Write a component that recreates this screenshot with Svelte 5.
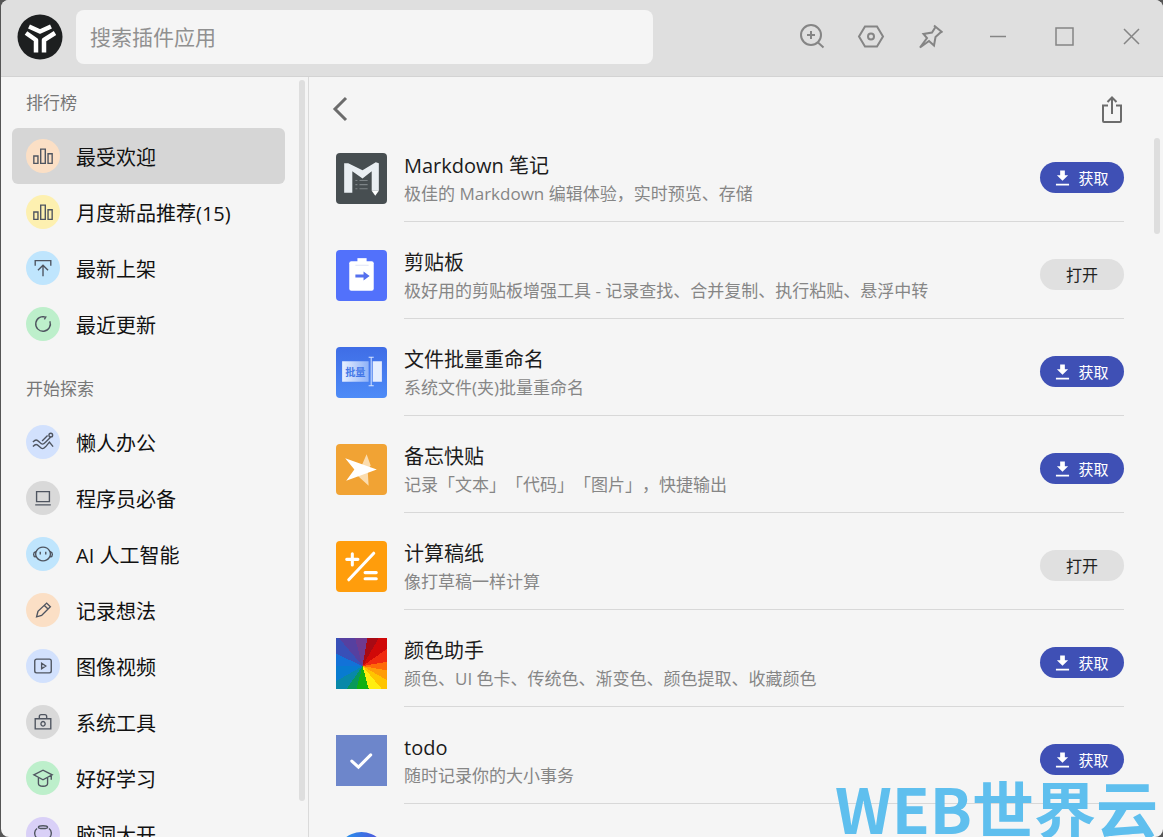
<script>
    let query = $state("");
    let active = $state("最受欢迎");

    const groups = [
        {
            title: "排行榜",
            items: [
                { name: "最受欢迎", icon: "chart", tint: "peach" },
                { name: "月度新品推荐(15)", icon: "chart", tint: "yellow" },
                { name: "最新上架", icon: "upload", tint: "sky" },
                { name: "最近更新", icon: "refresh", tint: "green" },
            ],
        },
        {
            title: "开始探索",
            items: [
                { name: "懒人办公", icon: "lazy", tint: "blue" },
                { name: "程序员必备", icon: "laptop", tint: "gray" },
                { name: "AI 人工智能", icon: "robot", tint: "sky" },
                { name: "记录想法", icon: "pencil", tint: "peach" },
                { name: "图像视频", icon: "video", tint: "blue" },
                { name: "系统工具", icon: "toolbox", tint: "gray" },
                { name: "好好学习", icon: "study", tint: "green" },
                { name: "脑洞大开", icon: "brain", tint: "purple" },
            ],
        },
    ];

    // 24x24 stroke icons
    const paths = {
        chart: "M2 12h4.500v8H2zM9.500 4.500h5V20h-5zM17.500 9.500H22V20h-4.500z",
        upload: "M3.500 9.500V4h17v5.500M12 21V9.500M6.500 14.500L12 9l5.500 5.500",
        refresh: "M19.500 9a8 8 0 1 1-4.500-4.500M11 4l4 .5-1.500 2.500",
        lazy: "M1 12c3-3 4-3 7 0s4 3 7 0l6-6M1 17c3-3 4-3 7 0s4 3 7 0l4-5 4 5M11 11l6-6M20.500 2.500a2 2 0 1 0 2 2 2 2 0 0 0-2-2",
        laptop: "M5 5h14v11H5zM3.500 19.500h17",
        robot: "M12 4.500a8 7.500 0 1 0 .1 0zM4 9.500c-3 1-3 5 0 6M20 9.500c3 1 3 5 0 6M9 9.500v3M15 9.500v3",
        pencil: "M5 19.500l1.500-6L16 4.500l4 4-9.500 9.500zM13.500 7l4 4",
        video: "M5 4.500h14a2 2 0 0 1 2 2v11a2 2 0 0 1-2 2H5a2 2 0 0 1-2-2v-11a2 2 0 0 1 2-2zM10.500 9v6l4.500-3z",
        toolbox: "M3.500 8.500h17v11h-17zM8 8.500V6a2 2 0 0 1 2-2h4a2 2 0 0 1 2 2v2.500M12 11.500a2.300 2.500 0 1 0 .1 0z",
        study: "M2 8.500L12 3.500l10 5-10 5.500zM7 12v6c0 1.500 2 3 5 3s5-1.500 5-3v-6M21 9v5",
        brain: "M7 4.500a5 1.500 0 1 0 10 0 5 1.500 0 1 0-10 0M5.500 6c-3 2-3 5-2 8l3 5v3M18.500 6c3 2 3 5 2 8l-3 5v3",
    };

    const plugins = [
        { name: "Markdown 笔记", desc: "极佳的 Markdown 编辑体验，实时预览、存储", logo: "markdown" },
        { name: "剪贴板", desc: "极好用的剪贴板增强工具 - 记录查找、合并复制、执行粘贴、悬浮中转", logo: "clipboard", installed: true },
        { name: "文件批量重命名", desc: "系统文件(夹)批量重命名", logo: "rename" },
        { name: "备忘快贴", desc: "记录「文本」「代码」「图片」，快捷输出", logo: "memo" },
        { name: "计算稿纸", desc: "像打草稿一样计算", logo: "calc", installed: true },
        { name: "颜色助手", desc: "颜色、UI 色卡、传统色、渐变色、颜色提取、收藏颜色", logo: "color" },
        { name: "todo", desc: "随时记录你的大小事务", logo: "todo" },
        { name: "OneNote hub", desc: "", logo: "ball" },
    ];
</script>

<div class="window">
    <header class="titlebar">
        <svg class="logo" viewBox="0 0 46 46" aria-hidden="true">
            <circle cx="23" cy="23" r="22.500" fill="#1d1f20" />
            <g fill="none" stroke="#fff" stroke-width="4.500" stroke-linejoin="round">
                <path d="M12 12.500l11 5L34 12.500" />
                <path d="M9 19l10 7V38.500" />
                <path d="M38 19l-11 7V38.500" />
            </g>
        </svg>
        <input class="search" type="text" placeholder="搜索插件应用" aria-label="搜索插件应用" bind:value={query} />
        <div class="tools">
            <button aria-label="放大">
                <svg viewBox="0 0 28 28"><circle cx="14" cy="12" r="10" /><path d="M21 19.500l5.500 5M14 8v8M10 12h8" /></svg>
            </button>
            <button aria-label="设置">
                <svg viewBox="0 0 28 28"><path d="M8 3.500h12L26 13.500l-6 10H8l-6-10z" /><circle cx="14" cy="13.500" r="3" /></svg>
            </button>
            <button aria-label="固定">
                <svg viewBox="0 0 28 28"><path d="M17 2.500l8.500 7M18.500 4L15 9.500 6.500 11l3.500 4-7 9.500 9-6.500 5 4.500 1.500-8.500 5.500-5" /></svg>
            </button>
        </div>
        <div class="controls">
            <button aria-label="最小化"><svg viewBox="0 0 28 28"><path d="M6 13.500h16" /></svg></button>
            <button aria-label="最大化"><svg viewBox="0 0 28 28"><path d="M6 5h17v17H6z" /></svg></button>
            <button aria-label="关闭"><svg viewBox="0 0 28 28"><path d="M8 6l15 15M23 6L8 21" /></svg></button>
        </div>
    </header>

    <div class="content">
        <nav class="sidebar">
            {#each groups as group}
                <section class="group">
                    <h2>{group.title}</h2>
                    {#each group.items as item}
                        <button class="item" class:active={active === item.name} onclick={() => (active = item.name)}>
                            <span class="badge {item.tint}">
                                <svg viewBox="0 0 24 24"><path d={paths[item.icon]} /></svg>
                            </span>
                            <span>{item.name}</span>
                        </button>
                    {/each}
                </section>
            {/each}
            <span class="thumb"></span>
        </nav>

        <main class="main">
            <div class="bar">
                <button aria-label="返回"><svg viewBox="0 0 28 28"><path d="M19 2L8 13l11 11" stroke-width="3" /></svg></button>
                <button aria-label="分享">
                    <svg viewBox="0 0 28 28"><path d="M10 9.500H5V25a1 1 0 0 0 1 1h16a1 1 0 0 0 1-1V9.500h-5M14 18V2M9.500 6L14 1.500 18.500 6" /></svg>
                </button>
            </div>
            <ul class="list">
                {#each plugins as plugin}
                    <li class="row">
                        <div class="app-icon {plugin.logo}">
                            {#if plugin.logo === "markdown"}
                                <svg viewBox="0 0 50 50">
                                    <path d="M8 10h4l14 7 13-8 3 1v27h-7V18l-9 7-10-7v21H8z" fill="#e9eef2" />
                                    <path d="M35 37h7l-3.500 5z" fill="#fff" />
                                    <path d="M19 27h2M23 27h8M19 31h2M23 31h8M19 35h2M23 35h8" stroke="#7d8487" />
                                </svg>
                            {:else if plugin.logo === "clipboard"}
                                <svg viewBox="0 0 50 50">
                                    <rect x="13" y="11" width="24" height="29" rx="2" fill="#fff" />
                                    <rect x="21" y="8" width="9" height="6" fill="#fff" />
                                    <path d="M19 15h13" stroke="#dfe3f5" />
                                    <path d="M19 24h8v-3l6 4.500-6 4.500v-3h-8z" fill="#5570ee" />
                                </svg>
                            {:else if plugin.logo === "rename"}
                                <svg viewBox="0 0 50 50">
                                    <defs>
                                        <linearGradient id="field">
                                            <stop offset="0" stop-color="#e8f0ff" />
                                            <stop offset="1" stop-color="#8fb2f8" />
                                        </linearGradient>
                                    </defs>
                                    <path d="M6 14h26v20H6z" fill="url(#field)" />
                                    <path d="M36 14h9v20h-9z" fill="#e6eeff" />
                                    <path d="M32 10h5M34.500 10v28M32 38h5" stroke="#d5e3ff" fill="none" />
                                    <text x="9" y="28" font-size="10" font-weight="700" fill="#4478e8">批量</text>
                                </svg>
                            {:else if plugin.logo === "memo"}
                                <svg viewBox="0 0 50 50">
                                    <path d="M30 10l4 11-3 4 1 16-11-10z" fill="#fbdcae" />
                                    <path d="M9 14l31 11L10 36l8-11z" fill="#fff" />
                                </svg>
                            {:else if plugin.logo === "calc"}
                                <svg viewBox="0 0 50 50">
                                    <path d="M12.500 38L37 12M10.500 18h11M16 12.500v11M28.500 31h11M28.500 37h11" stroke="#fff" stroke-width="3" stroke-linecap="round" />
                                </svg>
                            {:else if plugin.logo === "todo"}
                                <svg viewBox="0 0 50 50">
                                    <path d="M15.500 25.500l6.500 6 12-12" fill="none" stroke="#fff" stroke-width="3" stroke-linecap="round" />
                                </svg>
                            {/if}
                        </div>
                        <div class="body">
                            <div class="text">
                                <h3>{plugin.name}</h3>
                                <p>{plugin.desc}</p>
                            </div>
                            {#if plugin.installed}
                                <button class="action open">打开</button>
                            {:else}
                                <button class="action">
                                    <svg viewBox="0 0 16 16" aria-hidden="true"><path d="M5.500 0h5v5H14L8 11 2 5h3.500zM1 14h14v2H1z" /></svg>
                                    获取
                                </button>
                            {/if}
                        </div>
                    </li>
                {/each}
            </ul>
            <span class="thumb"></span>
        </main>
    </div>
    <div class="watermark">WEB世界云</div>
</div>

<style>
    :global(body) {
        background: #555;
        font-family: "Open Sans", "Noto Sans CJK SC", sans-serif;
        text-spacing-trim: space-all;
    }

    button {
        border: none;
        background: none;
        padding: 0;
        font-family: inherit;
        cursor: pointer;
    }

    h2,
    h3,
    p,
    ul {
        margin: 0;
        padding: 0;
        font-weight: 400;
    }

    .window {
        position: relative;
        box-sizing: border-box;
        height: 100vh;
        margin-left: 1px;
        display: flex;
        flex-direction: column;
        background: #f5f5f5;
        border-radius: 8px;
        overflow: hidden;
    }

    .titlebar {
        display: flex;
        align-items: center;
        flex: none;
        height: 74px;
        padding: 0 0 2px 16px;
        background: #dfdfdf;
        border-bottom: 1px solid #d3d3d3;
    }

    .logo {
        flex: none;
        width: 46px;
        height: 46px;
        margin-right: 13px;
    }

    .search {
        flex: 1;
        min-width: 0;
        box-sizing: border-box;
        height: 54px;
        margin-right: 128px;
        padding: 0 14px;
        border: none;
        border-radius: 8px;
        outline: none;
        background: #f5f5f5;
        font-family: inherit;
        font-size: 21px;
        color: #222;
    }

    .search::placeholder {
        color: #909090;
    }

    .tools,
    .controls {
        display: flex;
        flex: none;
    }

    .tools {
        margin-right: 4px;
    }

    .titlebar button {
        display: grid;
        place-items: center;
        width: 60px;
        height: 54px;
    }

    .titlebar .controls button {
        width: 66px;
    }

    .titlebar button svg {
        width: 28px;
        height: 28px;
        fill: none;
        stroke: #858585;
        stroke-width: 2;
    }

    .titlebar .controls svg {
        stroke-width: 1.5;
    }

    .content {
        display: flex;
        flex: 1;
        min-height: 0;
    }

    .sidebar {
        position: relative;
        flex: none;
        width: 273px;
        padding: 0 23px 0 11px;
        border-right: 1px solid #dadada;
        overflow: hidden;
    }

    .group + .group {
        margin-top: 11px;
    }

    .group h2 {
        padding-left: 14px;
        font-size: 17px;
        line-height: 51px;
        color: #777;
    }

    .item {
        display: flex;
        align-items: center;
        gap: 16px;
        width: 100%;
        height: 56px;
        padding-left: 14px;
        border-radius: 6px;
        font-size: 20px;
        color: #111;
        text-align: left;
    }

    .item.active {
        background: #d6d6d6;
    }

    .badge {
        display: grid;
        place-items: center;
        width: 34px;
        height: 34px;
        border-radius: 50%;
    }

    .badge svg {
        width: 22px;
        height: 22px;
        fill: none;
        stroke: #4f5560;
        stroke-width: 1.5;
    }

    .peach { background: #fbdfc5; }
    .yellow { background: #fdf0b0; }
    .sky { background: #bfe5fd; }
    .green { background: #bdefcb; }
    .blue { background: #d2e1fd; }
    .gray { background: #d9d9d9; }
    .purple { background: #d9d0f7; }

    .thumb {
        position: absolute;
        width: 6px;
        border-radius: 3px;
        background: #dedede;
    }

    .sidebar .thumb {
        top: 3px;
        right: 3px;
        bottom: 36px;
    }

    .main {
        position: relative;
        flex: 1;
        min-width: 0;
        overflow: hidden;
    }

    .main .thumb {
        top: 61px;
        right: 3px;
        height: 96px;
    }

    .bar {
        display: flex;
        justify-content: space-between;
        align-items: flex-end;
        height: 48px;
        padding: 0 37px 0 18px;
    }

    .bar button {
        height: 30px;
    }

    .bar svg {
        display: block;
        width: 28px;
        height: 28px;
        fill: none;
        stroke: #6c6c6c;
        stroke-width: 2;
    }

    .list {
        list-style: none;
        padding: 0 39px 0 27px;
    }

    .row {
        display: flex;
        gap: 17px;
    }

    .app-icon {
        flex: none;
        width: 51px;
        height: 51px;
        margin-top: 28px;
        border-radius: 4px;
        overflow: hidden;
    }

    .app-icon svg {
        display: block;
    }

    .markdown { background: #474e51; }
    .clipboard { background: #5271fb; }
    .rename { background: linear-gradient(#3f6de6, #4d8bf7); }
    .memo { background: #f1a334; }
    .calc { background: #ff9d0c; }
    .todo { background: #6d86cb; border-radius: 0; }
    .ball { background: linear-gradient(90deg, #1ba0f0, #5a48d8); border-radius: 50%; }
    .color {
        border-radius: 0;
        background: conic-gradient(
            from 10deg at 52% 55%,
            #a80a14 0 20deg,
            #d00808 0 45deg,
            #f02a10 0 70deg,
            #ff6a08 0 90deg,
            #ff9c08 0 110deg,
            #ffc400 0 130deg,
            #ffee10 0 155deg,
            #12b012 0 185deg,
            #08985a 0 205deg,
            #0888a8 0 230deg,
            #087bd0 0 260deg,
            #1272d8 0 285deg,
            #3850b8 0 310deg,
            #5640a0 0 335deg,
            #6e3a90 0
        );
    }

    .body {
        display: flex;
        align-items: flex-start;
        justify-content: space-between;
        flex: 1;
        min-width: 0;
        padding: 27px 0 13px;
        border-bottom: 1px solid #d8d8d8;
    }

    .text h3 {
        font-size: 20px;
        line-height: 28px;
        color: #1c1c1c;
    }

    .text p {
        min-height: 28px;
        font-size: 17px;
        line-height: 28px;
        color: #868686;
    }

    .action {
        display: flex;
        align-items: center;
        justify-content: center;
        gap: 8px;
        flex: none;
        width: 84px;
        height: 31px;
        margin-top: 10px;
        border-radius: 16px;
        background: #3f50b5;
        font-size: 15px;
        line-height: 28px;
        color: #fff;
    }

    .action svg {
        width: 15px;
        height: 16px;
        fill: #fff;
    }

    .action.open {
        background: #e0e0e0;
        font-size: 16px;
        color: #222;
    }

    .watermark {
        position: absolute;
        right: 5px;
        bottom: 3px;
        font-family: "Noto Sans CJK SC", sans-serif;
        font-size: 62px;
        font-weight: 700;
        line-height: 54px;
        color: #5fbfee;
        pointer-events: none;
    }
</style>
